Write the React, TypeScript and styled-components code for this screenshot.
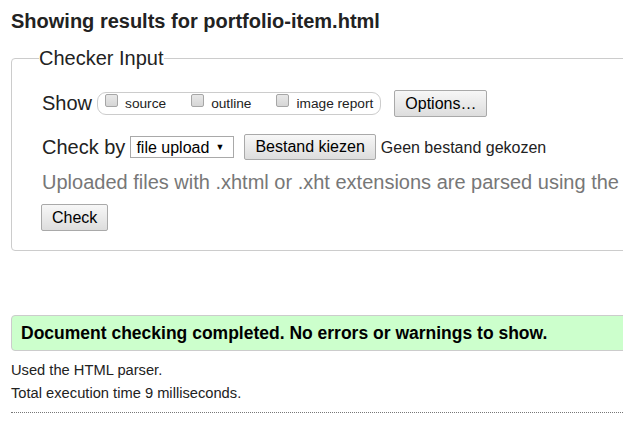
import { FC } from 'react'
import styled, { createGlobalStyle } from 'styled-components'

const GlobalStyle = createGlobalStyle`
	html, body {
		margin: 0;
		padding: 0;
		background: #fff;
		overflow: hidden;
	}

	body {
		font-family: 'Liberation Sans', Arial, sans-serif;
		color: #222;
	}
`

const Page = styled.div`
	width: 900px;
	padding: 9px 0 0 11px;
`

const Heading = styled.h2`
	margin: 0;
	font-size: 20px;
	line-height: 24px;
	font-weight: bold;
	color: #222;
`

const Fieldset = styled.fieldset`
	margin: 15px 0 0;
	padding: 0 0 19px 30px;
	border: 1px solid #ccc;
	border-radius: 4px;
	min-width: 0;
`

const Legend = styled.legend`
	margin-left: -3px;
	padding: 0;
	font-size: 20px;
	line-height: 20px;
`

const Row = styled.div<{ $top: number }>`
	display: flex;
	align-items: center;
	margin-top: ${({ $top }) => $top}px;
	font-size: 20px;
	line-height: 23px;
	white-space: nowrap;
`

const Label = styled.span<{ $gap: number }>`
	margin-right: ${({ $gap }) => $gap}px;
`

const Pill = styled.div`
	display: flex;
	align-items: flex-start;
	height: 21px;
	padding: 0 7px;
	border: 1px solid #ccc;
	border-radius: 9px;
	margin-right: 13px;
`

const Option = styled.label`
	display: flex;
	align-items: flex-start;
	gap: 7px;
	font-size: 13.7px;
	line-height: 21px;
	color: #222;

	& + & {
		margin-left: 25px;
	}
`

const Box = styled.span`
	display: block;
	width: 11px;
	height: 11px;
	margin-top: 1px;
	border: 1px solid #a6a6a6;
	border-radius: 2px;
	background: linear-gradient(#e8e8e8, #d6d6d6);
`

const Button = styled.button<{ $h: number; $pad: number }>`
	height: ${({ $h }) => $h}px;
	padding: 0 ${({ $pad }) => $pad}px;
	font-family: 'Liberation Sans', Arial, sans-serif;
	font-size: 16px;
	color: #000;
	border: 1px solid #a9a9a9;
	border-radius: 2px;
	background: linear-gradient(#f7f7f7, #dddddd);
`

const Select = styled.span`
	display: flex;
	align-items: center;
	justify-content: space-between;
	box-sizing: border-box;
	width: 104px;
	height: 22px;
	padding: 0 9px 0 5px;
	margin-right: 10px;
	border: 1px solid #a9a9a9;
	font-size: 16px;
	color: #000;
	background: #fff;
`

const Arrow = styled.span`
	font-size: 9px;
	line-height: 1;
`

const FileName = styled.span`
	margin-left: 5px;
	font-size: 16px;
`

const Hint = styled.div`
	margin-top: 11px;
	font-size: 20px;
	line-height: 23px;
	color: #777;
	white-space: nowrap;
`

const CheckRow = styled.div`
	margin-top: 10px;
	margin-left: -1px;
`

const Success = styled.div`
	margin-top: 64px;
	height: 34px;
	padding-left: 9px;
	border: 1px solid #ccc;
	border-radius: 4px;
	background: #ccffcc;
	font-size: 17.5px;
	font-weight: bold;
	line-height: 34px;
	color: #000;
`

const Details = styled.div`
	margin-top: 8px;
	padding-bottom: 7px;
	border-bottom: 1px dotted #777;
	font-size: 14.7px;
	line-height: 23px;
	color: #222;
`

const App: FC = () => (
	<>
		<GlobalStyle />
		<Page>
			<Heading>Showing results for portfolio-item.html</Heading>
			<Fieldset>
				<Legend>Checker Input</Legend>
				<Row $top={22}>
					<Label $gap={5}>Show</Label>
					<Pill>
						<Option><Box />source</Option>
						<Option><Box />outline</Option>
						<Option><Box />image report</Option>
					</Pill>
					<Button $h={27} $pad={10}>Options…</Button>
				</Row>
				<Row $top={17}>
					<Label $gap={5}>Check by</Label>
					<Select>
						file upload
						<Arrow>▼</Arrow>
					</Select>
					<Button $h={26} $pad={10}>Bestand kiezen</Button>
					<FileName>Geen bestand gekozen</FileName>
				</Row>
				<Hint>Uploaded files with .xhtml or .xht extensions are parsed using the</Hint>
				<CheckRow>
					<Button $h={27} $pad={10}>Check</Button>
				</CheckRow>
			</Fieldset>
			<Success>Document checking completed. No errors or warnings to show.</Success>
			<Details>
				<div>Used the HTML parser.</div>
				<div>Total execution time 9 milliseconds.</div>
			</Details>
		</Page>
	</>
)

export default App
